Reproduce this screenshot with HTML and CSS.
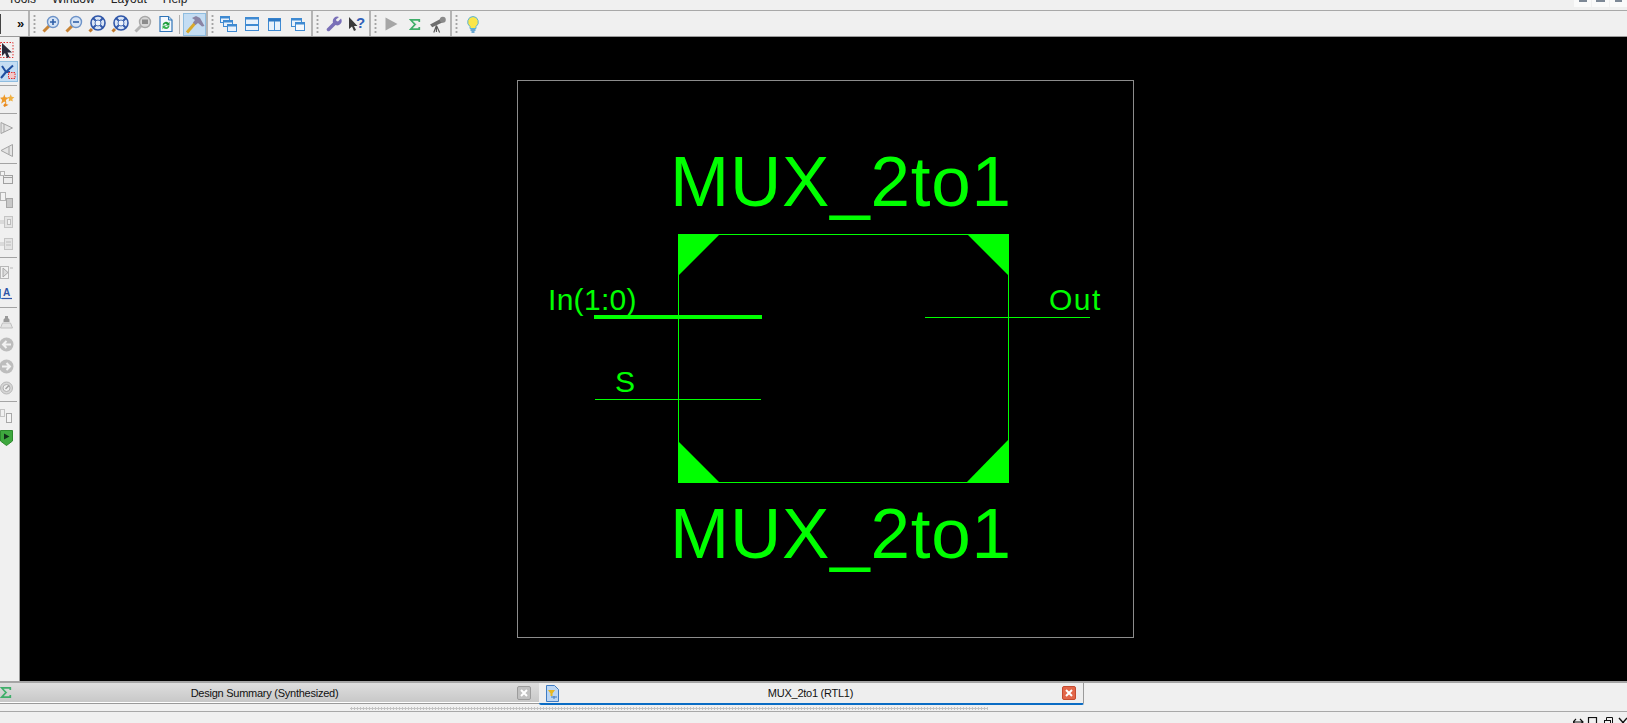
FILE: index.html
```html
<!DOCTYPE html>
<html lang="en">

<head>
    <meta charset="UTF-8">
    <title>MUX_2to1 (RTL1)</title>
    <link rel="stylesheet" href="styles.css">
</head>

<body>

    <svg class="defs" width="0" height="0">
        <symbol id="sigma" viewBox="0 0 14 14">
            <path d="M12 4V1.5H2L7 7L2 12.5H12V10" fill="none" stroke="#3fae6a" stroke-width="2" />
            <path d="M4.5 3L9 7" stroke="#a8e0bc" stroke-width="1" />
        </symbol>
        <symbol id="fit" viewBox="0 0 18 18">
            <circle cx="10" cy="8" r="7" fill="#dbe6f6" stroke="#2f56a8" stroke-width="1.6" />
            <path d="M5 3L15 13M15 3L5 13" stroke="#2f56a8" stroke-width="1.8" />
            <circle cx="10" cy="8" r="3" fill="#eef3fb" stroke="#4a70b8" stroke-width="1" />
            <path d="M1.5 16.5L4 14" stroke="#c27a2c" stroke-width="3" />
        </symbol>
    </svg>

    <div class="menubar">
        <span class="menu-item">Tools</span>
        <span class="menu-item">Window</span>
        <span class="menu-item">Layout</span>
        <span class="menu-item">Help</span>
        <div class="win-btns">
            <span class="win-btn"><i class="win-min"></i></span>
            <span class="win-btn"><i class="win-max"></i></span>
            <span class="win-btn"><i class="win-close"></i></span>
        </div>
    </div>

    <div class="toolbar">
        <div class="tool-group first">
            <span class="chevrons">»</span>
        </div>

        <div class="tool-group g1">
            <div class="handle"></div>
            <div class="tool">
                <svg width="18" height="18" viewBox="0 0 18 18">
                    <path d="M1.5 16.5L7 11" stroke="#c88436" stroke-width="3" />
                    <circle cx="11" cy="7" r="5.5" fill="#d6e4f6" stroke="#6d93c8" stroke-width="1.4" />
                    <path d="M8 7H14M11 4V10" stroke="#2f5fa8" stroke-width="1.6" />
                </svg>
            </div>
            <div class="tool">
                <svg width="18" height="18" viewBox="0 0 18 18">
                    <path d="M1.5 16.5L7 11" stroke="#c88436" stroke-width="3" />
                    <circle cx="11" cy="7" r="5.5" fill="#d6e4f6" stroke="#6d93c8" stroke-width="1.4" />
                    <path d="M8 7H14" stroke="#2f5fa8" stroke-width="1.6" />
                </svg>
            </div>
            <div class="tool"><svg width="18" height="18"><use href="#fit" /></svg></div>
            <div class="tool"><svg width="18" height="18"><use href="#fit" /></svg></div>
            <div class="tool">
                <svg width="18" height="18" viewBox="0 0 18 18">
                    <path d="M1.5 16.5L7 11" stroke="#b4b4b4" stroke-width="3" />
                    <circle cx="11" cy="7" r="5.5" fill="#d8d8d8" stroke="#a8a8a8" stroke-width="1.4" />
                    <rect x="8" y="4.5" width="6" height="4.5" fill="#8c8c8c" />
                </svg>
            </div>
            <div class="tool">
                <svg width="16" height="18" viewBox="0 0 16 18">
                    <path d="M2 1.5H10.5L14 5V16.5H2Z" fill="#f4f8fd" stroke="#2f74b8" stroke-width="1.2" />
                    <path d="M10.5 1.5V5H14" fill="#bcd6ee" stroke="#2f74b8" />
                    <path d="M4.5 9.5A3.500 3.500 0 0 1 10.5 8L11.5 6.5V10.5H7.5L9 9.5A2 2 0 0 0 6 10Z" fill="#1f9e3c" />
                    <path d="M11.5 11A3.500 3.500 0 0 1 5.5 13L4.5 14.5V10.5H8.5L7 11.5A2 2 0 0 0 10 11Z" fill="#38b552" />
                </svg>
            </div>
            <div class="tool-sep"></div>
            <div class="tool active">
                <svg width="20" height="19" viewBox="0 0 20 19">
                    <path d="M2 17.5L11 7" stroke="#d8a92c" stroke-width="3" />
                    <path d="M7 3L11 1L15 3L19.5 11L17 11.5L13 8L10.5 10L8 7.5L10 5Z" fill="#8a84a4" />
                </svg>
            </div>
        </div>

        <div class="tool-group g2">
            <div class="handle"></div>
            <div class="tool">
                <svg width="17" height="16" viewBox="0 0 17 16">
                    <rect x="0.5" y="0.5" width="9" height="6" fill="#e8f1fb" stroke="#3f8ad2" />
                    <rect x="0.5" y="0.5" width="9" height="2" fill="#3f8ad2" />
                    <rect x="3.5" y="4.5" width="9" height="6" fill="#e8f1fb" stroke="#3f8ad2" />
                    <rect x="3.5" y="4.5" width="9" height="2" fill="#3f8ad2" />
                    <rect x="7.5" y="8.5" width="9" height="7" fill="#e8f1fb" stroke="#3f8ad2" />
                    <rect x="7.5" y="8.5" width="9" height="2" fill="#3f8ad2" />
                </svg>
            </div>
            <div class="tool">
                <svg width="14" height="14" viewBox="0 0 14 14">
                    <rect x="0.5" y="0.5" width="13" height="13" fill="#e8f1fb" stroke="#3f8ad2" />
                    <rect x="0.5" y="0.5" width="13" height="2" fill="#3f8ad2" />
                    <rect x="0.5" y="7" width="13" height="2" fill="#3f8ad2" />
                </svg>
            </div>
            <div class="tool">
                <svg width="13" height="13" viewBox="0 0 13 13">
                    <rect x="0.5" y="0.5" width="12" height="12" fill="#e8f1fb" stroke="#3f8ad2" />
                    <rect x="0.5" y="0.5" width="12" height="3" fill="#2d78c4" />
                    <path d="M6.5 3V12.5" stroke="#3f8ad2" />
                </svg>
            </div>
            <div class="tool">
                <svg width="14" height="13" viewBox="0 0 14 13">
                    <rect x="0.5" y="0.5" width="10" height="8" fill="#e8f1fb" stroke="#3f8ad2" />
                    <rect x="0.5" y="0.5" width="10" height="2" fill="#3f8ad2" />
                    <rect x="4.5" y="4.5" width="9" height="8" fill="#f4f8fd" stroke="#3f8ad2" />
                    <rect x="4.5" y="4.5" width="9" height="2" fill="#3f8ad2" />
                </svg>
            </div>
        </div>

        <div class="tool-group">
            <div class="handle"></div>
            <div class="tool">
                <svg width="16" height="16" viewBox="0 0 16 16">
                    <path d="M15 2.5L12 5.5L10.5 5L10 3.5L13 1A4.500 4.500 0 0 0 7 6.5L1 12.5A1.800 1.800 0 0 0 3.5 15L9.5 9A4.500 4.500 0 0 0 15 2.5Z" fill="#7a70b8" />
                </svg>
            </div>
            <div class="tool">
                <svg width="17" height="16" viewBox="0 0 17 16">
                    <path d="M1 1V13L4 10.5L6 15L8 14L6 10H9.5Z" fill="#3a3a3a" />
                    <text class="help-mark" x="8" y="12">?</text>
                </svg>
            </div>
        </div>

        <div class="tool-group">
            <div class="handle"></div>
            <div class="tool">
                <svg width="13" height="14" viewBox="0 0 13 14">
                    <path d="M0.5 0.5L12.5 7L0.5 13.5Z" fill="#a6a6a6" />
                </svg>
            </div>
            <div class="tool"><svg width="12" height="13"><use href="#sigma" /></svg></div>
            <div class="tool">
                <svg width="17" height="17" viewBox="0 0 16 16">
                    <path d="M1 8L12 2L14 5.5L3 10.5Z" fill="#6e6e6e" />
                    <circle cx="13" cy="3.5" r="2.8" fill="#8a8a8a" />
                    <path d="M7 9L4.5 15.5M7 9L10 15.5M7 9V15" stroke="#5a5a5a" stroke-width="1.1" fill="none" />
                </svg>
            </div>
        </div>

        <div class="tool-group last">
            <div class="handle"></div>
            <div class="tool">
                <svg width="12" height="17" viewBox="0 0 12 17">
                    <path d="M6 0.5A5.500 5.500 0 0 0 3 10.5V12.5H9V10.5A5.500 5.500 0 0 0 6 0.5Z" fill="#fbe64a" stroke="#58b4dc" />
                    <path d="M3.5 14H8.5M4.5 16H7.5" stroke="#3f90c8" stroke-width="1.4" />
                </svg>
            </div>
        </div>
    </div>

    <div class="workspace">
        <div class="sidebar">
            <div class="side-tool short">
                <svg width="14" height="17" viewBox="0 0 14 17">
                    <rect x="0.5" y="0.5" width="12.5" height="15" fill="none" stroke="#e03030" stroke-dasharray="1.5 1.5" />
                    <path d="M2 1V14L5 11L7 16L9.5 15L7.500 10.5H12Z" fill="#2a2a3a" />
                </svg>
            </div>
            <div class="side-tool short on">
                <svg width="16" height="16" viewBox="0 0 16 16">
                    <path d="M2 2L6 8L13 1.500M6 8L1 14M6 8H10" fill="none" stroke="#1f4fa0" stroke-width="2" />
                    <rect x="8.5" y="8.5" width="6.5" height="6" fill="#f4c8c8" stroke="#e03030" stroke-dasharray="1.5 1" />
                </svg>
            </div>
            <div class="side-sep"></div>
            <div class="side-tool">
                <svg width="15" height="16" viewBox="0 0 14 15">
                    <path d="M4 2L5 5L8 5.5L5.5 7.5L6 11L4 9L1 11L2 7.5L0 5.5L3 5Z" fill="#ee9a2a" />
                    <path d="M10 2L11 4.5L13.5 5L11.5 6.5L12 9L10 8L8 9L8.500 6.5L7 5L9 4.5Z" fill="#f0b040" />
                    <path d="M5 10L6 11.5L8 12L6.500 13L4 14L3 12.5Z" fill="#e88a20" />
                </svg>
            </div>
            <div class="side-sep"></div>
            <div class="side-tool">
                <svg width="14" height="14" viewBox="0 0 14 14">
                    <path d="M1 1.5L12.5 7L1 12.5Z" fill="#e4e4e4" stroke="#a4a4a4" />
                    <path d="M4 3V11" stroke="#a4a4a4" />
                </svg>
            </div>
            <div class="side-tool">
                <svg width="14" height="15" viewBox="0 0 14 15">
                    <path d="M12.5 1.5L1 7.5L12.5 13.5Z" fill="#e4e4e4" stroke="#a4a4a4" />
                    <path d="M9 3.5V11.5" stroke="#a4a4a4" />
                </svg>
            </div>
            <div class="side-sep"></div>
            <div class="side-tool">
                <svg width="14" height="14" viewBox="0 0 14 14">
                    <rect x="3.5" y="4.5" width="9" height="8" fill="#ececec" stroke="#a0a0a0" />
                    <rect x="0.5" y="0.5" width="4" height="4" fill="#f4f4f4" stroke="#b4b4b4" />
                    <path d="M4 6.5H12" stroke="#a0a0a0" />
                </svg>
            </div>
            <div class="side-tool">
                <svg width="14" height="16" viewBox="0 0 14 16">
                    <rect x="0.5" y="0.5" width="5" height="8" fill="#f2f2f2" stroke="#b4b4b4" />
                    <rect x="6.5" y="6.5" width="6" height="9" fill="#c8c8c8" stroke="#a8a8a8" />
                </svg>
            </div>
            <div class="side-tool">
                <svg width="14" height="14" viewBox="0 0 14 14">
                    <rect x="4.5" y="1.5" width="8" height="11" fill="#e4e4e4" stroke="#c4c4c4" />
                    <rect x="7.5" y="4.5" width="3" height="5" fill="#f2f2f2" stroke="#bcbcbc" />
                    <path d="M0 6H4M0 8H4" stroke="#c4c4c4" />
                </svg>
            </div>
            <div class="side-tool">
                <svg width="14" height="14" viewBox="0 0 14 14">
                    <rect x="4.5" y="1.5" width="8" height="11" fill="#e4e4e4" stroke="#c4c4c4" />
                    <path d="M6 5H11M6 8H11" stroke="#bcbcbc" />
                    <path d="M0 6H4M0 8H4" stroke="#c4c4c4" />
                </svg>
            </div>
            <div class="side-sep"></div>
            <div class="side-tool">
                <svg width="14" height="14" viewBox="0 0 14 14">
                    <rect x="0.5" y="1.5" width="8" height="12" fill="#f2f2f2" stroke="#b8b8b8" />
                    <path d="M3 3V12L8 7.5Z" fill="#dcdcdc" stroke="#a8a8a8" />
                    <path d="M10 3H13" stroke="#b8b8b8" />
                </svg>
            </div>
            <div class="side-tool">
                <svg width="14" height="14" viewBox="0 0 14 14">
                    <path d="M0.5 2V11.5H2" fill="none" stroke="#3f8ad2" />
                    <text class="side-a" x="3" y="9">A</text>
                    <path d="M2 11.5H12" stroke="#2f56a8" stroke-width="1.2" />
                </svg>
            </div>
            <div class="side-sep"></div>
            <div class="side-tool">
                <svg width="14" height="14" viewBox="0 0 14 14">
                    <path d="M5 1H8V3L9.5 4.5V7H3.5V4.5L5 3Z" fill="#9a9a9a" />
                    <path d="M2.5 8H10.5L12.5 13H0.5Z" fill="#e4e4e4" stroke="#c0c0c0" />
                </svg>
            </div>
            <div class="side-tool">
                <svg width="15" height="15" viewBox="0 0 15 15">
                    <circle cx="6.5" cy="7.5" r="7" fill="#bdbdbd" />
                    <path d="M11 7.5H3M6.5 4L3 7.5L6.5 11" fill="none" stroke="#f2f2f2" stroke-width="2" />
                </svg>
            </div>
            <div class="side-tool">
                <svg width="15" height="15" viewBox="0 0 15 15">
                    <circle cx="6.5" cy="7.5" r="7" fill="#bdbdbd" />
                    <path d="M2 7.5H10M6.5 4L10 7.5L6.5 11" fill="none" stroke="#f2f2f2" stroke-width="2" />
                </svg>
            </div>
            <div class="side-tool">
                <svg width="14" height="14" viewBox="0 0 14 14">
                    <circle cx="6.5" cy="7" r="6" fill="#d6d6d6" stroke="#b8b8b8" />
                    <circle cx="6.5" cy="7" r="3.5" fill="#f0f0f0" stroke="#b0b0b0" />
                    <path d="M9 4.5L5.5 8" stroke="#a0a0a0" stroke-width="1.4" />
                </svg>
            </div>
            <div class="side-sep"></div>
            <div class="side-tool">
                <svg width="14" height="14" viewBox="0 0 14 14">
                    <rect x="0.5" y="0.5" width="4" height="7" fill="#f0f0f0" stroke="#c4c4c4" />
                    <rect x="6.5" y="4.5" width="5" height="9" fill="#f4f4f4" stroke="#a8a8a8" />
                </svg>
            </div>
            <div class="side-tool">
                <svg width="13" height="16" viewBox="0 0 13 16">
                    <path d="M0.5 0.5H12.5V11L6.5 15.5L0.5 11Z" fill="#3ea83e" stroke="#2c8a2c" />
                    <path d="M4 3.5L9.5 6.5L4 9.5Z" fill="#12301a" />
                </svg>
            </div>
        </div>

        <div class="canvas">
            <svg class="schematic" viewBox="20 37 1607 644" shape-rendering="crispEdges">
                <rect class="frame" x="517.5" y="80.5" width="616" height="557" />

                <text class="sym-name" x="670" y="206">MUX_2to1</text>
                <text class="sym-name" x="670" y="558">MUX_2to1</text>

                <rect class="wire" x="678" y="234" width="331" height="1" />
                <rect class="wire" x="678" y="482" width="331" height="1" />
                <rect class="wire" x="678" y="234" width="1" height="249" />
                <rect class="wire" x="1008" y="234" width="1" height="249" />

                <g shape-rendering="auto">
                    <path class="corner" d="M678 234H720L678 276Z" />
                    <path class="corner" d="M967 234H1009V276Z" />
                    <path class="corner" d="M678 441L720 483H678Z" />
                    <path class="corner" d="M1009 439V483H966Z" />
                </g>

                <text class="pin-name" x="548" y="310">In(1:0)</text>
                <text class="pin-name" x="615" y="392">S</text>
                <text class="pin-name wide" x="1049" y="310">Out</text>

                <rect class="wire" x="594" y="315" width="168" height="4" />
                <rect class="wire" x="595" y="399" width="166" height="1" />
                <rect class="wire" x="925" y="317" width="165" height="1" />
            </svg>
        </div>
    </div>

    <div class="tabbar">
        <div class="tab">
            <svg class="tab-icon" width="12" height="13"><use href="#sigma" /></svg>
            <span class="tab-title">Design Summary (Synthesized)</span>
            <span class="tab-close">
                <svg width="8" height="8" viewBox="0 0 8 8"><path d="M1 1L7 7M7 1L1 7" stroke="#fff" stroke-width="2" /></svg>
            </span>
        </div>
        <div class="tab current">
            <svg class="tab-icon" width="13" height="17" viewBox="0 0 13 17">
                <path d="M0.5 0.5H8.5L12.5 4.5V16.5H0.5Z" fill="#bcd6f2" stroke="#3f7cc4" />
                <path d="M2 5H9L6.5 8.5V11H4.5V8.5Z" fill="#e8b820" />
                <path d="M5 12H11M8 11V14" stroke="#3f7cc4" />
            </svg>
            <span class="tab-title">MUX_2to1 (RTL1)</span>
            <span class="tab-close red">
                <svg width="8" height="8" viewBox="0 0 8 8"><path d="M1 1L7 7M7 1L1 7" stroke="#fff" stroke-width="2" /></svg>
            </span>
        </div>
    </div>

    <div class="splitter">
        <div class="grip"></div>
    </div>

    <div class="statusbar">
        <span class="dock-icons">
            <svg width="54" height="11" viewBox="0 0 54 11">
                <path d="M0 5H10M3 2L0 5L3 8M7 2L10 5L7 8" fill="none" stroke="#111" stroke-width="1.2" />
                <rect x="15.5" y="0.5" width="8" height="9" fill="none" stroke="#111" stroke-width="1.2" />
                <rect x="31.5" y="3.5" width="6" height="7" fill="none" stroke="#111" />
                <path d="M33.5 3V0.5H39.5V7H38" fill="none" stroke="#111" />
                <path d="M46 1L54 10M54 1L46 10" stroke="#111" stroke-width="1.4" />
            </svg>
        </span>
    </div>

</body>

</html>
```

FILE: styles.css
```css
* {
    box-sizing: border-box;
}

html,
body {
    margin: 0;
    height: 723px;
    overflow: hidden;
    background-color: #f0f0f0;
    font-family: "Liberation Sans", Arial, sans-serif;
}

.defs {
    display: block;
    height: 0;
}

svg {
    display: block;
}

/* menu row, only the bottom of it is on screen */
.menubar {
    height: 11px;
    display: flex;
    overflow: hidden;
    border-bottom: 1px solid #a8a8a8;
    padding-left: 8px;
}

.menu-item {
    margin-top: -8px;
    margin-right: 16px;
    font-size: 12px;
    line-height: 15px;
    color: #222;
}

.win-btns {
    margin-left: auto;
    display: flex;
    gap: 1px;
}

.win-btn {
    width: 17px;
    height: 7px;
    background-color: #fafafa;
    display: flex;
    justify-content: center;
}

.win-btn i {
    display: block;
    width: 8px;
    height: 2px;
    background-color: #7d8896;
}

.win-btn i.win-max {
    width: 9px;
}

.win-btn i.win-close {
    width: 7px;
}

.toolbar {
    height: 26px;
    display: flex;
    border-bottom: 1px solid #9a9a9a;
}

.tool-group {
    display: flex;
    align-items: center;
    padding: 1px 1px 0 3px;
    border-right: 2px solid #b4b4b4;
}

.tool-group.first {
    width: 30px;
    padding: 0;
}

.chevrons {
    margin-left: 17px;
    font-size: 13px;
    font-weight: bold;
    color: #111;
}

.tool-group.first::before {
    content: "";
    position: absolute;
    left: 0;
    top: 14px;
    width: 1px;
    height: 20px;
    background-color: #444;
}

.tool-group.g1 {
    padding-right: 0;
}

.tool-group.g2 {
    padding-right: 2px;
}

.tool-group.last {
    border-right: none;
}

.handle {
    width: 3px;
    height: 21px;
    margin-right: 3px;
    background-image: radial-gradient(circle, #a4a4a4 1px, transparent 1.2px);
    background-size: 3px 4px;
}

.tool {
    width: 23px;
    height: 23px;
    display: flex;
    align-items: center;
    justify-content: center;
}

.tool.active {
    background-color: #c4ddf3;
    border: 1px solid #8fbde0;
}

.tool-sep {
    width: 1px;
    height: 19px;
    margin: 0 3px 0 2px;
    background-color: #b0b0b0;
}

.help-mark {
    font-size: 15px;
    font-weight: bold;
    fill: #2f5fb8;
}

.workspace {
    height: 644px;
    display: flex;
}

.sidebar {
    width: 20px;
    flex-shrink: 0;
    display: flex;
    flex-direction: column;
    padding-top: 3px;
    border-right: 1px solid #9a9a9a;
}

.side-tool {
    height: 22px;
    width: 18px;
    flex-shrink: 0;
    display: flex;
    align-items: center;
}

.side-tool.short {
    height: 21px;
}

.side-tool.on {
    margin-bottom: 1px;
    background-color: #c4ddf3;
    border: 1px solid #8fbde0;
    border-left: none;
}

.side-sep {
    height: 1px;
    flex-shrink: 0;
    margin: 2px 2px 3px 0;
    background-color: #a4a4a4;
}

.side-a {
    font-size: 10px;
    font-weight: bold;
    fill: #2f56a8;
}

.canvas {
    flex: 1;
    background-color: #000;
}

.schematic {
    width: 1607px;
    height: 644px;
}

.frame {
    fill: none;
    stroke: #8c8c8c;
    stroke-width: 1;
}

.wire,
.corner {
    fill: #00ff00;
}

.sym-name,
.pin-name {
    fill: #00ff00;
    font-family: "Liberation Sans", Arial, sans-serif;
}

.sym-name {
    font-size: 71px;
    letter-spacing: 0.8px;
}

.pin-name {
    font-size: 30px;
    letter-spacing: 0.3px;
}

.pin-name.wide {
    letter-spacing: 1.5px;
}

.tabbar {
    height: 24px;
    display: flex;
    border-top: 2px solid #a4a4a4;
    background-color: #f0f0f0;
}

.tab {
    width: 539px;
    height: 20px;
    display: flex;
    align-items: center;
    padding-right: 8px;
    background-image: linear-gradient(#dedede, #c8c8c8);
    border-bottom: 1px solid #fff;
    box-shadow: 0 1px 0 #9a9a9a;
}

.tab-icon {
    flex-shrink: 0;
}

.tab-title {
    flex: 1;
    text-align: center;
    font-size: 11px;
    letter-spacing: -0.25px;
    color: #111;
}

.tab-close {
    width: 14px;
    height: 14px;
    display: flex;
    align-items: center;
    justify-content: center;
    background-color: #c0c0c0;
    border: 1px solid #9c9c9c;
    border-radius: 2px;
}

.tab-close.red {
    background-color: #e2674a;
    border-color: #c44a30;
}

.tab.current {
    width: 545px;
    height: 22px;
    padding: 0 7px;
    background-image: none;
    background-color: #eeeeee;
    border-bottom: 2px solid #0a6cc4;
    border-right: 1px solid #9a9a9a;
    border-radius: 0 0 2px 2px;
    box-shadow: none;
}

.splitter {
    height: 7px;
    padding-top: 2px;
    border-bottom: 1px solid #a8a8a8;
}

.grip {
    width: 638px;
    height: 3px;
    margin-left: 350px;
    background-image: radial-gradient(circle, #c4c4c4 1px, transparent 1.1px);
    background-size: 3px 3px;
}

.statusbar {
    height: 11px;
    display: flex;
    justify-content: flex-end;
    padding-top: 5px;
    overflow: hidden;
}
```
